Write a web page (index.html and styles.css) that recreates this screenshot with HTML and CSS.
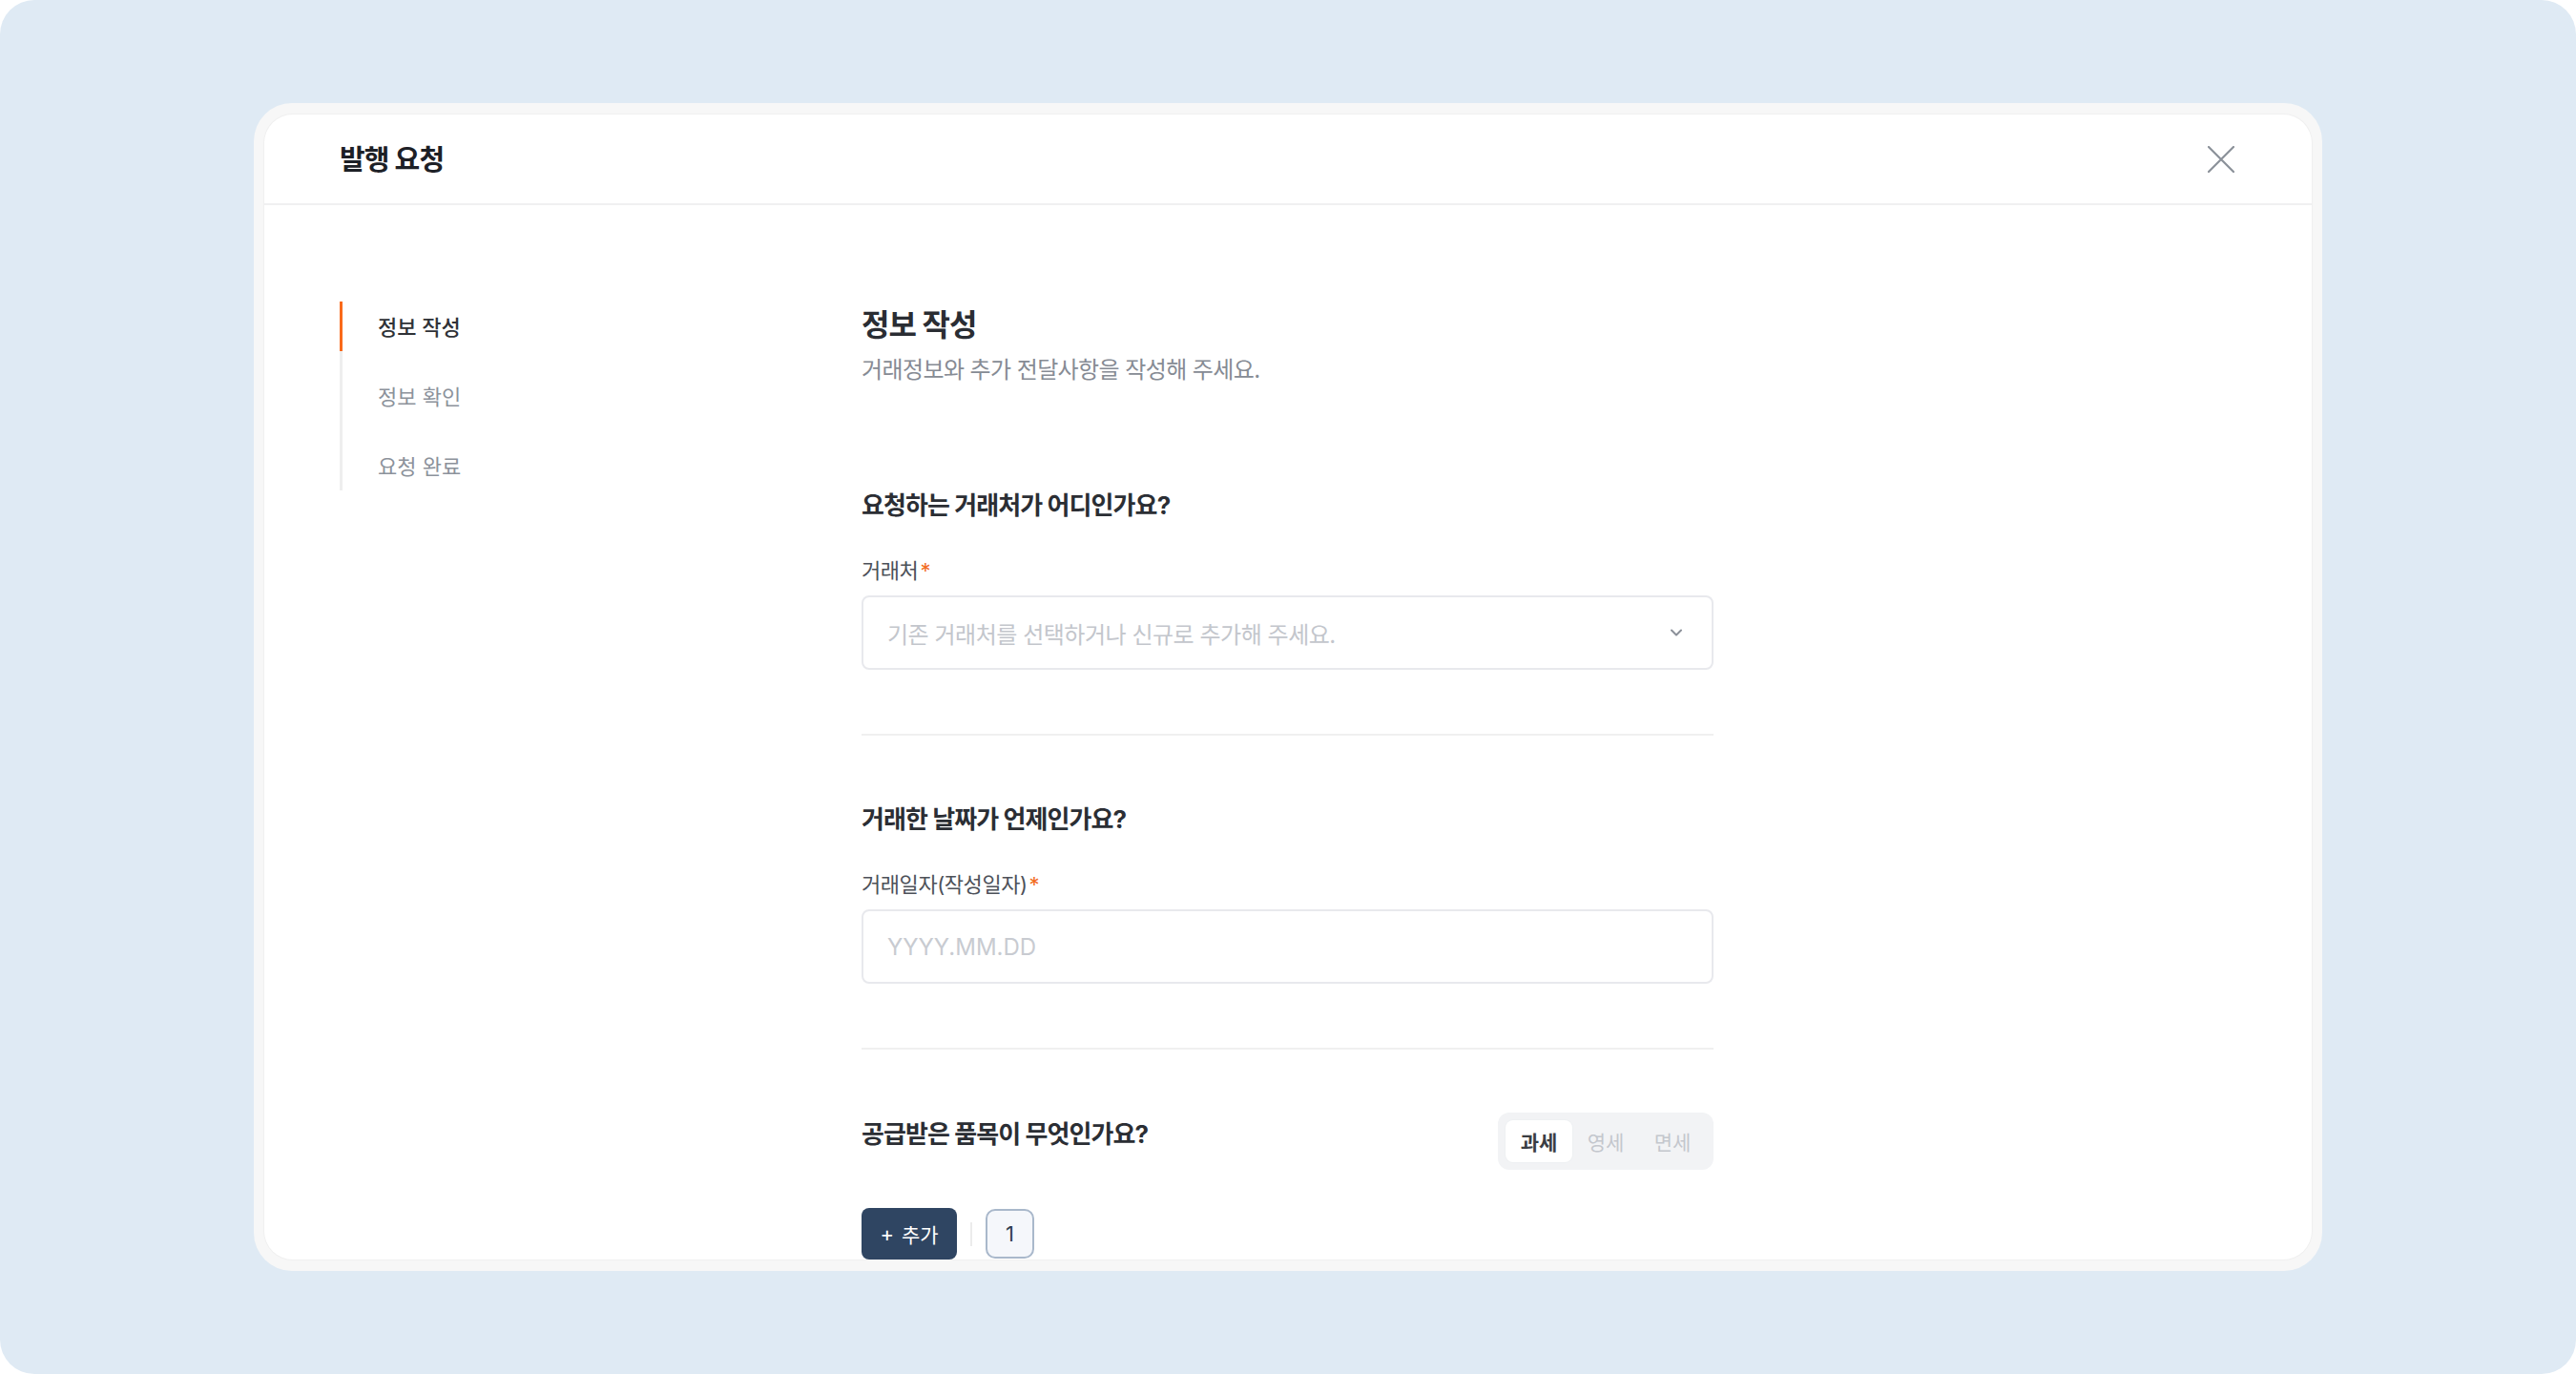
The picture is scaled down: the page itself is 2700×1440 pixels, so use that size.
FILE: index.html
```html
<!DOCTYPE html>
<html lang="ko">
<head>
<meta charset="utf-8">
<title>발행 요청</title>
<link rel="stylesheet" href="styles.css">
</head>
<body>
<div class="page">
  <div class="modal">
    <div class="card">
      <header class="header">
        <h2 class="title">발행 요청</h2>
        <button class="close" type="button" aria-label="닫기">
          <svg width="28" height="28" viewBox="0 0 28 28"><path d="M1 1L27 27M27 1L1 27" stroke="#8b9199" stroke-width="2.2" stroke-linecap="round"/></svg>
        </button>
      </header>
      <div class="body">
        <aside class="aside">
          <nav class="steps">
            <div class="step step--active">정보 작성</div>
            <div class="step">정보 확인</div>
            <div class="step">요청 완료</div>
          </nav>
        </aside>
        <main class="main">
          <div class="intro">
            <h1 class="h1">정보 작성</h1>
            <p class="subtitle">거래정보와 추가 전달사항을 작성해 주세요.</p>
          </div>

          <section class="section section--divided">
            <h3 class="section-title">요청하는 거래처가 어디인가요?</h3>
            <div class="field">
              <div class="label">거래처<span class="req">*</span></div>
              <div class="control">
                <span class="placeholder">기존 거래처를 선택하거나 신규로 추가해 주세요.</span>
                <svg class="chev" width="12" height="8" viewBox="0 0 12 8"><path d="M1 1.5L6 6.5L11 1.5" stroke="#8b9099" stroke-width="2" fill="none" stroke-linecap="round" stroke-linejoin="round"/></svg>
              </div>
            </div>
          </section>

          <section class="section section--divided">
            <h3 class="section-title">거래한 날짜가 언제인가요?</h3>
            <div class="field">
              <div class="label">거래일자(작성일자)<span class="req">*</span></div>
              <input class="control control--input" type="text" placeholder="YYYY.MM.DD">
            </div>
          </section>

          <section class="section section--last">
            <div class="row">
              <h3 class="section-title section-title--row">공급받은 품목이 무엇인가요?</h3>
              <div class="seg">
                <div class="seg-item seg-item--active">과세</div>
                <div class="seg-item">영세</div>
                <div class="seg-item">면세</div>
              </div>
            </div>
            <div class="actions">
              <button class="btn-add" type="button"><span class="plus">+</span>추가</button>
              <span class="sep"></span>
              <button class="page-btn" type="button">1</button>
            </div>
          </section>
        </main>
      </div>
    </div>
  </div>
</div>
</body>
</html>
```

FILE: styles.css
```css
* { box-sizing: border-box; }

html, body {
  margin: 0;
  padding: 0;
  background: #ffffff;
}

body {
  font-family: "Inter", "Noto Sans CJK KR", sans-serif;
  color: #2b2e34;
}

.page {
  width: 2700px;
  height: 1440px;
  background: #dfeaf4;
  border-radius: 36px;
  display: flex;
  align-items: center;
  justify-content: center;
}

.modal {
  width: 2168px;
  height: 1224px;
  padding: 12px 11px;
  background: #f7f7f7;
  border-radius: 40px;
  display: flex;
}

.card {
  flex: 1;
  background: #ffffff;
  border-radius: 30px;
  overflow: hidden;
  display: flex;
  flex-direction: column;
  box-shadow: 0 0 0 1px #f0f0f0;
}

.header {
  height: 95px;
  flex: none;
  display: flex;
  align-items: center;
  justify-content: space-between;
  padding: 0 81px 0 79px;
  border-bottom: 2px solid #f0f0f1;
}

.title {
  margin: 0;
  padding-top: 3px;
  font-size: 29px;
  line-height: 38px;
  font-weight: 700;
  letter-spacing: -0.03em;
  color: #1d2026;
}

.close {
  border: 0;
  background: transparent;
  padding: 0;
  width: 28px;
  height: 28px;
  display: flex;
  cursor: pointer;
}

.body {
  flex: 1;
  min-height: 0;
  display: flex;
  padding-left: 79px;
}

.aside {
  width: 547px;
  flex: none;
  padding-top: 101px;
}

.steps {
  display: flex;
  flex-direction: column;
  gap: 21px;
  border-left: 3px solid #eeeeee;
}

.step {
  height: 52px;
  margin-left: -3px;
  border-left: 3px solid transparent;
  padding-left: 37px;
  padding-bottom: 2px;
  display: flex;
  align-items: center;
  font-size: 22px;
  color: #8c929b;
}

.step--active {
  border-left-color: #f96a1b;
  color: #2f3237;
  font-weight: 500;
}

.main {
  width: 893px;
  flex: none;
  padding-top: 105px;
}

.intro {
  margin-bottom: 38px;
}

.h1 {
  margin: 0;
  font-size: 32px;
  line-height: 42px;
  font-weight: 700;
  letter-spacing: -0.03em;
  color: #2a2d33;
}

.subtitle {
  margin: 10px 0 0;
  font-size: 24px;
  line-height: 32px;
  letter-spacing: -0.025em;
  color: #868b94;
}

.section {
  padding: 71px 0 67px;
}

.section--divided {
  border-bottom: 2px solid #f0f0f0;
}

.section--last {
  padding-top: 66px;
}

.section-title {
  margin: 0;
  font-size: 26px;
  line-height: 34px;
  font-weight: 700;
  letter-spacing: -0.035em;
  color: #2b2e34;
}

.field {
  margin-top: 37px;
}

.label {
  font-size: 22px;
  line-height: 28px;
  letter-spacing: -0.02em;
  color: #4d5159;
}

.req {
  color: #f26c1e;
  margin-left: 2px;
}

.control {
  margin-top: 12px;
  width: 100%;
  height: 78px;
  border: 2px solid #e8e9ed;
  border-radius: 8px;
  padding: 0 31px 0 25px;
  display: flex;
  align-items: center;
  justify-content: space-between;
  background: #ffffff;
  font-family: "Inter", "Noto Sans CJK KR", sans-serif;
  font-size: 24px;
  letter-spacing: -0.02em;
  color: #2b2e34;
}

.placeholder {
  color: #c3c6cc;
}

.control--input {
  display: block;
  outline: none;
  letter-spacing: 0;
}

.control--input::placeholder {
  color: #c8cbd1;
}

.row {
  display: flex;
  justify-content: space-between;
  align-items: flex-start;
}

.section-title--row {
  margin-top: 6px;
}

.seg {
  display: flex;
  padding: 8px;
  background: #f2f3f5;
  border-radius: 12px;
}

.seg-item {
  width: 70px;
  height: 44px;
  display: flex;
  align-items: center;
  justify-content: center;
  border-radius: 8px;
  font-size: 21px;
  color: #c4c7cd;
}

.seg-item--active {
  background: #ffffff;
  color: #3a3d43;
  font-weight: 700;
  box-shadow: 0 0 0 1px #eef0f2;
}

.actions {
  margin-top: 40px;
  display: flex;
  align-items: center;
  gap: 14px;
}

.btn-add {
  width: 100px;
  height: 54px;
  border: 0;
  border-radius: 8px;
  background: #2f4562;
  color: #ffffff;
  font-family: "Inter", "Noto Sans CJK KR", sans-serif;
  font-size: 21px;
  display: flex;
  align-items: center;
  justify-content: center;
  gap: 8px;
  padding: 0;
}

.plus {
  font-size: 22px;
  line-height: 1;
}

.sep {
  width: 2px;
  height: 25px;
  background: #ececec;
}

.page-btn {
  width: 51px;
  height: 52px;
  border: 2px solid #a9b8cb;
  border-radius: 10px;
  background: #f5f7fb;
  color: #2f3d52;
  font-family: "Inter", "Noto Sans CJK KR", sans-serif;
  font-size: 22px;
  padding: 0;
}
```
